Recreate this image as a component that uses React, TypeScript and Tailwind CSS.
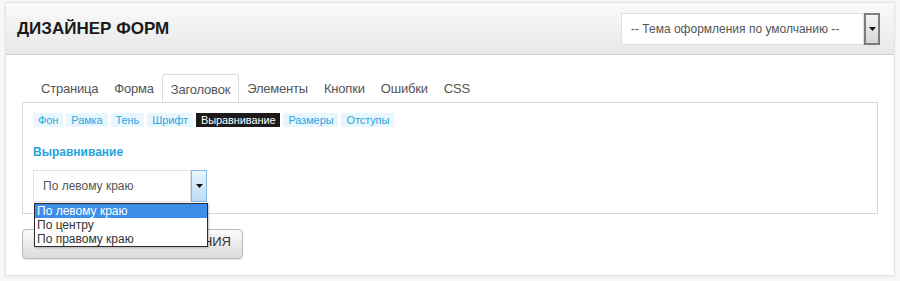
import React from "react";

const TABS = ["Страница", "Форма", "Заголовок", "Элементы", "Кнопки", "Ошибки", "CSS"];
const SUBTABS = ["Фон", "Рамка", "Тень", "Шрифт", "Выравнивание", "Размеры", "Отступы"];
const OPTIONS = ["По левому краю", "По центру", "По правому краю"];

function Caret() {
  return (
    <svg width="7" height="4" viewBox="0 0 7 4">
      <path d="M0 0h7L3.5 4z" fill="#111" />
    </svg>
  );
}

export default function App() {
  const activeTab = "Заголовок";
  const activeSub = "Выравнивание";

  return (
    <div className="h-[281px] w-[900px] bg-[#f7f7f7] px-[5px] pt-[2px] font-['Liberation_Sans',Arial,sans-serif]">
      <div className="h-[274px] border border-[#e3e3e3] bg-white shadow-[0_1px_3px_rgba(0,0,0,0.06)]">
        {/* шапка */}
        <div className="flex h-[52px] items-center justify-between border-b border-[#cdcdcd] bg-gradient-to-b from-[#fafafa] to-[#e7e8e9] pl-[11px] pr-[14px]">
          <h1 className="text-[17px] font-bold text-[#1b1b1b]">ДИЗАЙНЕР ФОРМ</h1>
          <div className="flex h-[32px]">
            <div className="flex w-[243px] items-center border border-[#e0e0e0] bg-white pl-[9px] text-[12px] text-[#555]">
              -- Тема оформления по умолчанию --
            </div>
            <div className="flex w-[16px] items-center justify-center border-2 border-[#7c7c7c] bg-gradient-to-b from-[#f5f5f5] to-[#d6d6d6]">
              <Caret />
            </div>
          </div>
        </div>

        {/* тело */}
        <div className="px-[16px] pt-[19px]">
          <div className="flex h-[28px] items-stretch pl-[11px]">
            {TABS.map((t) => (
              <div
                key={t}
                className={
                  t === activeTab
                    ? "relative -mb-px flex items-center rounded-t-[3px] border border-b-0 border-[#dcdcdc] bg-white px-[8px] pt-[2px] text-[13px] tracking-[-0.2px] text-[#555]"
                    : "flex items-center border border-transparent px-[7px] pt-[2px] text-[13px] tracking-[-0.2px] text-[#555]"
                }
              >
                {t}
              </div>
            ))}
          </div>

          <div className="relative h-[112px] border border-[#d9d9d9] px-[10px] pt-[10px]">
            <div className="flex gap-[3px]">
              {SUBTABS.map((s) => (
                <span
                  key={s}
                  className={
                    s === activeSub
                      ? "flex h-[14px] items-center bg-[#1c1a1a] px-[5px] text-[11px] tracking-[-0.1px] text-white"
                      : "flex h-[14px] items-center bg-[#e8f6fd] px-[5px] text-[11px] tracking-[-0.1px] text-[#2aa6e0]"
                  }
                >
                  {s}
                </span>
              ))}
            </div>

            <div className="mt-[16px] text-[12px] font-bold text-[#27a4de]">Выравнивание</div>

            <div className="relative mt-[9px] w-[174px]">
              <div className="flex h-[32px]">
                <div className="flex flex-1 items-center border border-[#e2e2e2] bg-white pl-[9px] text-[12px] text-[#555]">
                  По левому краю
                </div>
                <div className="flex w-[16px] items-center justify-center border border-[#86b6e2] bg-gradient-to-b from-[#eaf5fd] to-[#bcdcf5]">
                  <Caret />
                </div>
              </div>
              <ul className="absolute left-px top-[33px] z-10 w-[174px] border border-[#2b2b2b] bg-white text-[12px] leading-[14px] text-[#333] shadow-[1px_1px_2px_rgba(0,0,0,0.25)]">
                {OPTIONS.map((o, i) => (
                  <li key={o} className={i === 0 ? "bg-[#3c8ee8] pl-[2px] text-white" : "pl-[2px]"}>
                    {o}
                  </li>
                ))}
              </ul>
            </div>
          </div>

          <button
            type="button"
            className="mt-[15px] flex h-[30px] w-[221px] items-center justify-end rounded-[4px] border border-[#b8b8b8] bg-gradient-to-b from-[#fbfbfb] to-[#dcdcdc] pb-[4px] pr-[11px] text-[13px] text-[#333] shadow-[0_1px_1px_rgba(0,0,0,0.1)]"
          >
            СОХРАНИТЬ ИЗМЕНЕНИЯ
          </button>
        </div>
      </div>
    </div>
  );
}
